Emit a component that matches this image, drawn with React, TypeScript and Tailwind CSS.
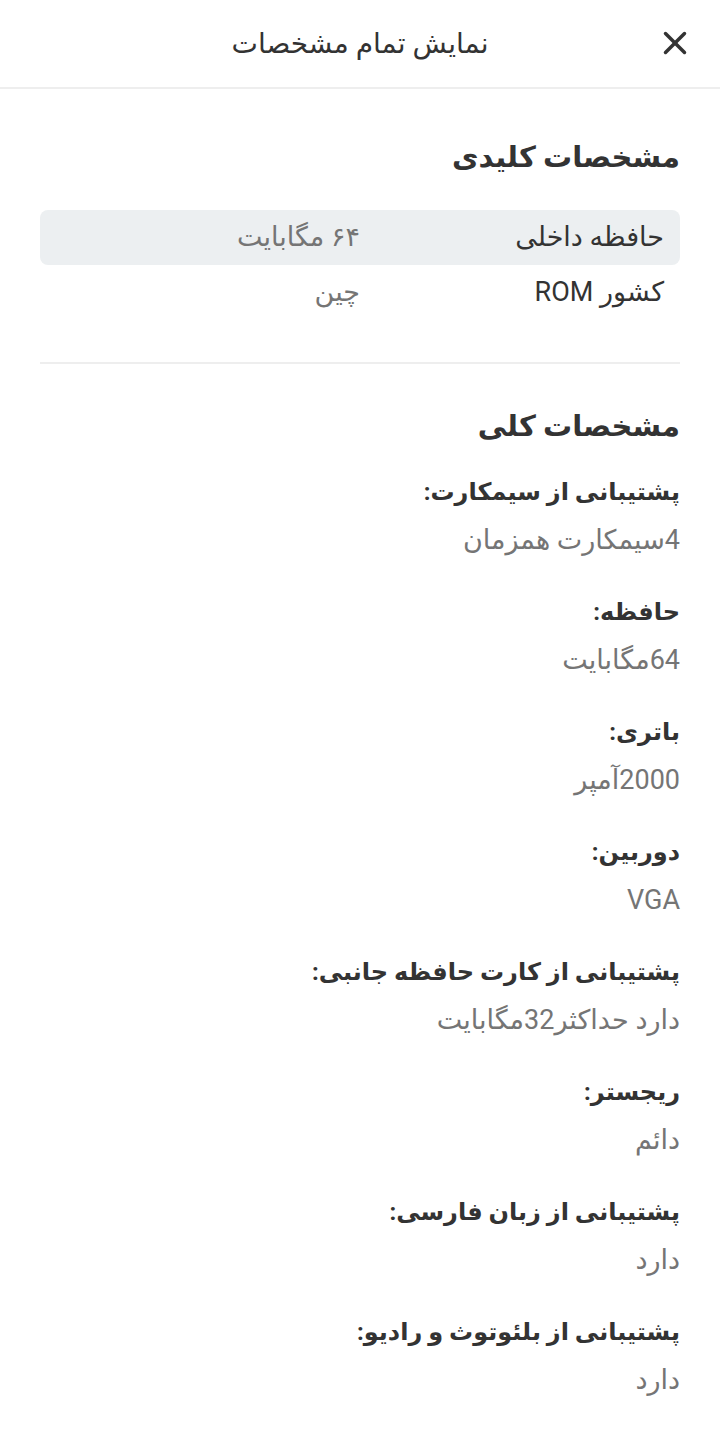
import { X } from "lucide-react";

const keySpecs = [
  { label: "حافظه داخلی", value: "۶۴ مگابایت" },
  { label: "کشور ROM", value: "چین" },
];

const generalSpecs = [
  { label: "پشتیبانی از سیمکارت:", value: "4سیمکارت همزمان" },
  { label: "حافظه:", value: "64مگابایت" },
  { label: "باتری:", value: "2000آمپر" },
  { label: "دوربین:", value: "VGA" },
  { label: "پشتیبانی از کارت حافظه جانبی:", value: "دارد حداکثر32مگابایت" },
  { label: "ریجستر:", value: "دائم" },
  { label: "پشتیبانی از زبان فارسی:", value: "دارد" },
  { label: "پشتیبانی از بلئوتوث و رادیو:", value: "دارد" },
];

export default function App() {
  return (
    <div
      dir="rtl"
      className="min-h-[1437px] w-[720px] bg-white text-[#424242]"
      style={{ fontFamily: 'Roboto, "DejaVu Sans", sans-serif' }}
    >
      {/* Header */}
      <div className="relative flex h-[89px] items-center justify-center border-b-2 border-[#eeeeee]">
        <h1 className="text-[28px] text-[#333333]">نمایش تمام مشخصات</h1>
        <button className="absolute right-[26px] top-[24px] text-[#333333]">
          <X className="h-[38px] w-[38px]" strokeWidth={2.2} />
        </button>
      </div>

      <div className="px-10">
        {/* Key specs */}
        <h2 className="mt-[40px] text-[29px] font-bold leading-[56px] text-[#333333]">
          مشخصات کلیدی
        </h2>
        <div className="mt-[25px] flex flex-col">
          {keySpecs.map((s, i) => (
            <div
              key={s.label}
              className={`grid h-[55px] grid-cols-[304px_1fr] items-center rounded-lg px-4 text-[27px] ${
                i === 0 ? "bg-[#eceff1]" : ""
              }`}
            >
              <span className="text-[#333333]">{s.label}</span>
              <span className="text-[#757575]">{s.value}</span>
            </div>
          ))}
        </div>

        <div className="mt-[42px] border-t-2 border-[#eeeeee]" />

        {/* General specs */}
        <h2 className="mt-[34px] text-[29px] font-bold leading-[56px] text-[#333333]">
          مشخصات کلی
        </h2>
        <div className="mt-[14px] flex flex-col gap-[24px]">
          {generalSpecs.map((s) => (
            <div key={s.label} className="flex flex-col">
              <span className="text-[24px] font-bold leading-[48px] text-[#333333]">
                {s.label}
              </span>
              <span className="text-[27px] leading-[48px] text-[#757575]">{s.value}</span>
            </div>
          ))}
        </div>
      </div>
    </div>
  );
}
